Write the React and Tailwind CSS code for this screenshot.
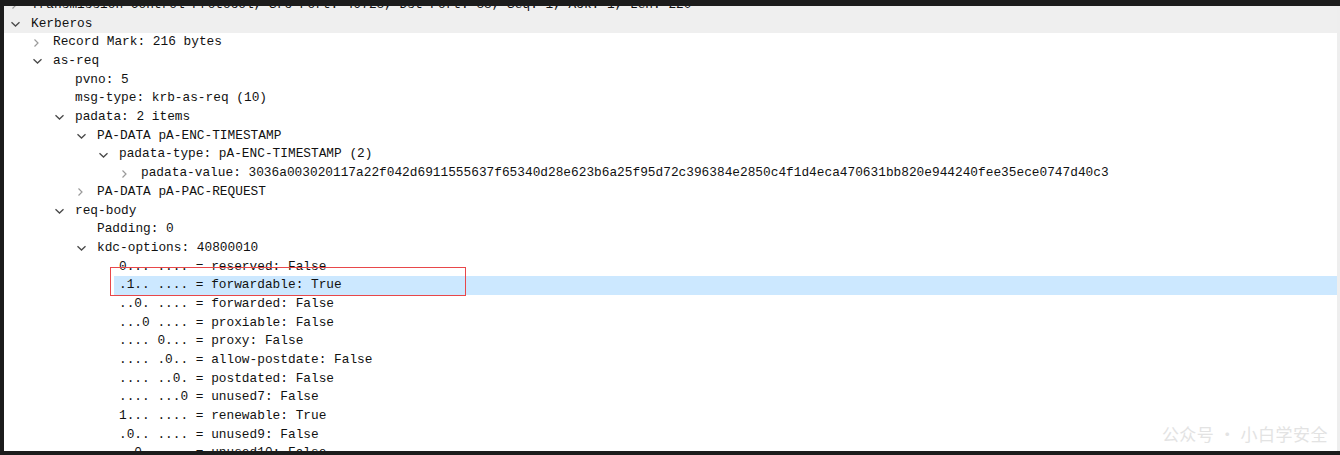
import React from "react";

const rows = [
  { l: 0, c: "r", t: "Transmission Control Protocol, Src Port: 49728, Dst Port: 88, Seq: 1, Ack: 1, Len: 220", gray: true },
  { l: 0, c: "d", t: "Kerberos", gray: true },
  { l: 1, c: "r", t: "Record Mark: 216 bytes" },
  { l: 1, c: "d", t: "as-req" },
  { l: 2, t: "pvno: 5" },
  { l: 2, t: "msg-type: krb-as-req (10)" },
  { l: 2, c: "d", t: "padata: 2 items" },
  { l: 3, c: "d", t: "PA-DATA pA-ENC-TIMESTAMP" },
  { l: 4, c: "d", t: "padata-type: pA-ENC-TIMESTAMP (2)" },
  { l: 5, c: "r", t: "padata-value: 3036a003020117a22f042d6911555637f65340d28e623b6a25f95d72c396384e2850c4f1d4eca470631bb820e944240fee35ece0747d40c3" },
  { l: 3, c: "r", t: "PA-DATA pA-PAC-REQUEST" },
  { l: 2, c: "d", t: "req-body" },
  { l: 3, t: "Padding: 0" },
  { l: 3, c: "d", t: "kdc-options: 40800010" },
  { l: 4, t: "0... .... = reserved: False" },
  { l: 4, t: ".1.. .... = forwardable: True", sel: true },
  { l: 4, t: "..0. .... = forwarded: False" },
  { l: 4, t: "...0 .... = proxiable: False" },
  { l: 4, t: ".... 0... = proxy: False" },
  { l: 4, t: ".... .0.. = allow-postdate: False" },
  { l: 4, t: ".... ..0. = postdated: False" },
  { l: 4, t: ".... ...0 = unused7: False" },
  { l: 4, t: "1... .... = renewable: True" },
  { l: 4, t: ".0.. .... = unused9: False" },
  { l: 4, t: "..0. .... = unused10: False" },
];

function Chevron({ c }) {
  if (c === "d")
    return (
      <svg width="22" height="12" viewBox="0 0 22 12" className="shrink-0">
        <path d="M2.5 4.2 L6.5 8 L10.5 4.2" fill="none" stroke="#4a4a4a" strokeWidth="1.3" />
      </svg>
    );
  if (c === "r")
    return (
      <svg width="22" height="12" viewBox="0 0 22 12" className="shrink-0">
        <path d="M3.5 2.5 L7 6 L3.5 9.5" fill="none" stroke="#9a9a9a" strokeWidth="1.2" />
      </svg>
    );
  return <div className="w-[22px] shrink-0" />;
}

function Row({ r }) {
  const pad = 5 + 22 * r.l;
  return (
    <div
      className={`flex items-center h-[18.7px] whitespace-nowrap ${r.gray ? "bg-[#efefef]" : ""}`}
      style={{ paddingLeft: pad }}
    >
      <Chevron c={r.c} />
      {r.sel ? (
        <div className="flex-1 h-full flex items-center bg-[#cce8ff] ml-[-5px] pl-[5px]">{r.t}</div>
      ) : (
        <span>{r.t}</span>
      )}
    </div>
  );
}

export default function App() {
  return (
    <div className="relative w-[1340px] h-[455px] bg-[#1c1c1c] pt-[6px] pl-[4px] pb-[4px] overflow-hidden">
      <div
        className="h-[445px] bg-white overflow-hidden border-r-[3px] border-[#eeeeee] text-[#111111] text-[12.8px] leading-none"
        style={{ fontFamily: '"Liberation Mono", "DejaVu Sans Mono", monospace' }}
      >
        <div className="mt-[-10px] flex flex-col">
          {rows.map((r, i) => (
            <Row key={i} r={r} />
          ))}
        </div>
      </div>
      <div className="absolute left-[110px] top-[267px] w-[356px] h-[29px] border border-[#e8474a] pointer-events-none" />
      <div
        className="absolute right-[12px] bottom-[9px] text-[17px] text-[#e3e3e3] tracking-[0.5px]"
        style={{ fontFamily: '"Noto Sans CJK SC", sans-serif' }}
      >
        公众号 · 小白学安全
      </div>
    </div>
  );
}
